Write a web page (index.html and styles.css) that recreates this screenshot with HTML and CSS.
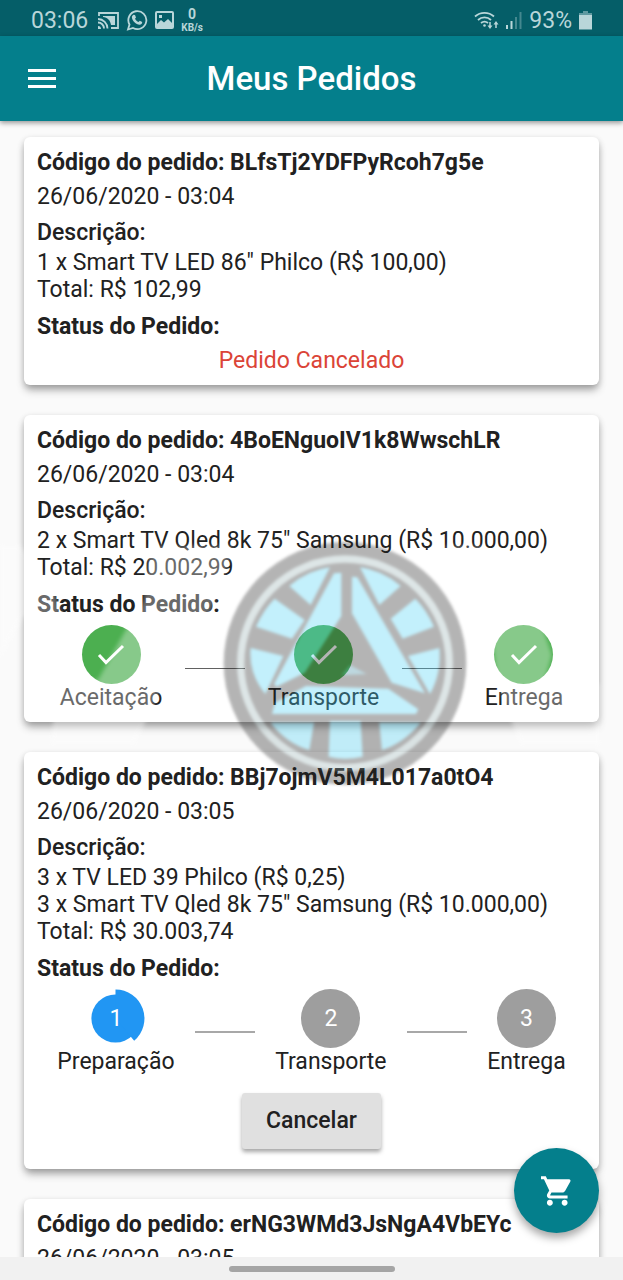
FILE: index.html
```html
<!DOCTYPE html>
<html lang="pt-BR">
<head>
<meta charset="utf-8">
<meta name="viewport" content="width=device-width, initial-scale=1">
<title>Meus Pedidos</title>
<link rel="stylesheet" href="styles.css">
</head>
<body>
<div class="app">
  <div class="statusbar">
    <span class="clock">03:06</span>
    <svg class="ic-cast" viewBox="0 0 21 17" width="21" height="17" fill="none" stroke="currentColor" stroke-width="1.8"><path d="M1 4V1h19v15h-7"/><path d="M5 4h12v9h-4C12.500 8.500 9.500 5.500 5 5z" fill="currentColor" stroke="none"/><path d="M0 7a9.500 9.500 0 0 1 9.500 9.500M0 10.500a6 6 0 0 1 6 6"/><path d="M0 14a3 3 0 0 1 3 3H0z" fill="currentColor" stroke="none"/></svg>
    <svg class="ic-wa" viewBox="0 0 22 22" width="22" height="22"><path d="M2 20.500l1.500-5A9 9 0 1 1 7 19z" fill="none" stroke="currentColor" stroke-width="1.800"/><path d="M7.500 5.800l1.500.2 1 2.500-1 1.300c.8 1.500 2 2.600 3.500 3.300l1.300-1.300 2.400 1.200c.1 1.500-1 2.700-2.700 2.700-3.500-.4-7.300-4-7.600-7.300 0-1 .6-2 1.600-2.600z" fill="currentColor"/></svg>
    <svg class="ic-img" viewBox="0 0 19 18" width="19" height="18"><path fill="currentColor" fill-rule="evenodd" d="M2 0h15a2 2 0 0 1 2 2v14a2 2 0 0 1-2 2H2a2 2 0 0 1-2-2V2a2 2 0 0 1 2-2zM2 2v11l4-4 3 2.500L13 8l4 4V2zM4 4h3v3H4z"/></svg>
    <span class="speed"><b>0</b><small>KB/s</small></span>
    <span class="grow"></span>
    <svg class="ic-wifi" viewBox="0 0 25 20" width="25" height="20" fill="none" stroke="currentColor" stroke-width="1.800"><path d="M1 6.500a14 14 0 0 1 19 0M4 10a9.500 9.500 0 0 1 13 0M7 13a5.500 5.500 0 0 1 7 0"/><circle cx="10.500" cy="15.500" r="1.300" fill="currentColor" stroke="none"/><path d="M16 12v5M22 18v-5" stroke-width="1.500"/><path d="M13.500 15.500h5L16 19zM19.500 14.500h5L22 11z" fill="currentColor" stroke="none"/></svg>
    <svg class="ic-signal" viewBox="0 0 16 17" width="16" height="17" fill="currentColor"><path d="M0 13h2v4H0zM4.500 9h2v8h-2z"/><path opacity=".35" d="M9 5h2v12H9zM13.500 0h2v17h-2z"/></svg>
    <span class="battery-text">93%</span>
    <svg class="ic-bat" viewBox="0 0 13 19" width="13" height="19"><path fill="currentColor" opacity=".5" d="M4 0h5v2h4v3H0V2h4z"/><path fill="currentColor" d="M0 4h13v14.500H0z"/></svg>
  </div>

  <header class="appbar">
    <button class="menu" type="button" aria-label="Menu"><svg viewBox="0 0 28 19" width="28" height="19"><path fill="currentColor" d="M0 0h28v3H0zM0 8h28v3H0zM0 16h28v3H0z"/></svg></button>
    <h1>Meus Pedidos</h1>
  </header>

  <main class="orders">
    <article class="card">
      <h2>Código do pedido: BLfsTj2YDFPyRcoh7g5e</h2>
      <p class="date">26/06/2020 - 03:04</p>
      <h3>Descrição:</h3>
      <p class="items">1 x Smart TV LED 86" Philco (R$ 100,00)<br>Total: R$ 102,99</p>
      <h4>Status do Pedido:</h4>
      <p class="cancelled">Pedido Cancelado</p>
    </article>

    <article class="card">
      <h2>Código do pedido: 4BoENguoIV1k8WwschLR</h2>
      <p class="date">26/06/2020 - 03:04</p>
      <h3>Descrição:</h3>
      <p class="items">2 x Smart TV Qled 8k 75" Samsung (R$ 10.000,00)<br>Total: R$ 20.002,99</p>
      <h4>Status do Pedido:</h4>
      <div class="steps">
        <div class="step"><span class="dot done"><svg viewBox="0 0 28 21" width="28" height="21"><path d="M2 11l7 7.500L26 2" fill="none" stroke="currentColor" stroke-width="3"/></svg></span>Aceitação</div>
        <span class="link dark"></span>
        <div class="step"><span class="dot done"><svg viewBox="0 0 28 21" width="28" height="21"><path d="M2 11l7 7.500L26 2" fill="none" stroke="currentColor" stroke-width="3"/></svg></span>Transporte</div>
        <span class="link dark"></span>
        <div class="step"><span class="dot done"><svg viewBox="0 0 28 21" width="28" height="21"><path d="M2 11l7 7.500L26 2" fill="none" stroke="currentColor" stroke-width="3"/></svg></span>Entrega</div>
      </div>
    </article>

    <article class="card">
      <h2>Código do pedido: BBj7ojmV5M4L017a0tO4</h2>
      <p class="date">26/06/2020 - 03:05</p>
      <h3>Descrição:</h3>
      <p class="items">3 x TV LED 39 Philco (R$ 0,25)<br>3 x Smart TV Qled 8k 75" Samsung (R$ 10.000,00)<br>Total: R$ 30.003,74</p>
      <h4>Status do Pedido:</h4>
      <div class="steps">
        <div class="step"><span class="dot current"><svg class="progress" viewBox="-30 -30 60 60"><circle r="24.500" fill="#2196f3"/><path d="M0 0V-29.500A29.500 29.500 0 0 1 19 22.500z" fill="#2196f3"/></svg><span class="num">1</span></span>Preparação</div>
        <span class="link"></span>
        <div class="step"><span class="dot">2</span>Transporte</div>
        <span class="link"></span>
        <div class="step"><span class="dot">3</span>Entrega</div>
      </div>
      <button class="cancel" type="button">Cancelar</button>
    </article>

    <article class="card">
      <h2>Código do pedido: erNG3WMd3JsNgA4VbEYc</h2>
      <p class="date">26/06/2020 - 03:05</p>
    </article>

    <svg class="watermark" viewBox="0 530 623 260" aria-hidden="true">
      <g class="veil" fill="#fff">
        <path d="M150 546H234L212 608 160 690 135 745H50L58 684 98 680 128 626 144 600z"/>
        <path d="M0 545H20L54 590 62 616 24 616 0 660z"/>
        <path d="M444 546H482L542 625 552 655 545 680 600 684 600 745H520L498 684 492 640z"/>
      </g>
      <g class="emblem" transform="translate(200 530) scale(.3333)">
        <circle cx="435" cy="400" r="364" fill="#202020"/>
        <circle cx="435" cy="400" r="313" fill="none" stroke="#9ab4b6" stroke-width="22"/>
        <g fill="#4cd2f6">
          <path d="M268 168Q325 120 390 112L332 225z"/>
          <path d="M224 206L314 270 276 326 168 290Q190 240 224 206z"/>
          <path d="M152 354L250 378 196 492Q145 430 152 354z"/>
          <path d="M602 168Q545 120 480 112L538 225z"/>
          <path d="M646 206L572 266 608 326 702 290Q680 240 646 206z"/>
          <path d="M718 354L624 378 690 492Q725 430 718 354z"/>
          <path d="M402 130L424 128 424 258 314 428 230 470 222 462z"/>
          <path d="M456 140L472 142 675 490 575 458 456 250z"/>
          <path d="M318 468L565 476 655 538 648 552H216L225 518z"/>
          <path d="M212 578H342L328 660Q260 640 212 578z"/>
          <path d="M390 574H482L488 680Q435 692 386 680z"/>
          <path d="M538 578H662Q610 640 546 660z"/>
          <path d="M450 405L500 432 425 436z" opacity=".6"/>
        </g>
      </g>
    </svg>
  </main>

  <button class="fab" type="button" aria-label="Carrinho"><svg viewBox="1 2 21 20" width="31" height="30"><path fill="currentColor" d="M7 18c-1.100 0-1.990.9-1.990 2S5.900 22 7 22s2-.9 2-2-.9-2-2-2zM1 2v2h2l3.600 7.590-1.350 2.450c-.16.280-.25.610-.25.960 0 1.100.9 2 2 2h12v-2H7.420c-.14 0-.25-.11-.25-.25l.03-.12.900-1.630h7.450c.75 0 1.410-.41 1.750-1.030l3.580-6.490A1 1 0 0 0 20 4H5.210l-.94-2H1zm16 16c-1.100 0-1.990.9-1.990 2s.89 2 1.990 2 2-.9 2-2-.9-2-2-2z"/></svg></button>
  <div class="navbar"><span class="handle"></span></div>
</div>
</body>
</html>
```
FILE: styles.css
```css
* {
  box-sizing: border-box;
}

body {
  margin: 0;
  background: #fafafa;
  color: #212121;
  font: 23px/27px Roboto, sans-serif;
}

h1, h2, h3, h4, p {
  margin: 0;
  font-size: inherit;
}

button {
  border: 0;
  padding: 0;
  font: inherit;
  color: inherit;
  background: none;
  cursor: pointer;
}

svg {
  display: block;
  flex: none;
}

.app {
  position: relative;
  display: flex;
  flex-direction: column;
  height: 100vh;
  overflow: hidden;
}

/* system status bar */
.statusbar {
  display: flex;
  align-items: center;
  height: 36px;
  flex: none;
  padding: 4px 31px 0;
  background: #055e68;
  color: #b9d6d9;
  gap: 7px;
}

.clock {
  margin-right: 3px;
}

.grow {
  flex: 1;
}

.speed {
  display: flex;
  flex-direction: column;
  align-items: center;
  font-size: 14px;
  line-height: 15px;
}

.speed small {
  font-size: 10px;
  font-weight: 700;
  line-height: 11px;
}

/* app bar */
.appbar {
  position: relative;
  z-index: 2;
  display: grid;
  grid-template-columns: 28px 1fr 28px;
  align-items: center;
  flex: none;
  height: 85px;
  padding: 0 28px;
  background: #047f8c;
  color: #fff;
  box-shadow: 0 2px 5px rgba(0, 0, 0, .4);
}

.appbar h1 {
  text-align: center;
  font-size: 33px;
  line-height: 40px;
  font-weight: 500;
}

/* order list */
.orders {
  position: relative;
  flex: 1;
  min-height: 0;
  overflow: hidden;
  display: flex;
  flex-direction: column;
  gap: 30px;
  padding: 16px 24px 0;
}

.card {
  flex: none;
  padding: 12px 13px 11px;
  border-radius: 6px;
  background: #fff;
  box-shadow: 0 6px 8px -1px rgba(0, 0, 0, .3), 0 2px 6px rgba(0, 0, 0, .15);
}

.card h2 {
  font-weight: 700;
  margin-bottom: 7px;
}

.date {
  margin-bottom: 9px;
}

.card h3 {
  font-weight: 500;
  margin-bottom: 3px;
}

.items {
  margin-bottom: 10px;
}

.card h4 {
  font-weight: 700;
  margin-bottom: 7px;
}

.cancelled {
  text-align: center;
  color: #db4437;
}

.steps {
  display: flex;
  align-items: center;
  justify-content: space-evenly;
}

.step {
  display: flex;
  flex-direction: column;
  align-items: center;
}

.dot {
  position: relative;
  display: flex;
  align-items: center;
  justify-content: center;
  width: 59px;
  height: 59px;
  border-radius: 50%;
  background: #9e9e9e;
  color: #fff;
}

.done {
  background: #4caf50;
}

.current {
  background: none;
}

.progress {
  position: absolute;
  inset: 0;
}

.num {
  position: relative;
}

.link {
  width: 60px;
  height: 2px;
  background: #a8a8a8;
}

.dark {
  height: 1px;
  background: #616161;
}

.cancel {
  display: block;
  margin: 18px auto 9px;
  padding: 14px 24px 15px;
  border-radius: 3px;
  background: #e0e0e0;
  font-weight: 500;
  box-shadow: 0 3px 4px rgba(0, 0, 0, .35);
}

/* translucent emblem drawn over the list */
.watermark {
  position: absolute;
  top: 409px;
  left: 0;
  width: 100%;
  pointer-events: none;
}

.veil {
  opacity: .33;
  filter: blur(2px);
}

.emblem {
  opacity: .33;
  filter: blur(5px);
}

.fab {
  position: absolute;
  z-index: 3;
  right: 24px;
  bottom: 47px;
  display: flex;
  align-items: center;
  justify-content: center;
  width: 85px;
  height: 85px;
  border-radius: 50%;
  background: #047f8c;
  color: #fff;
  box-shadow: 0 5px 9px rgba(0, 0, 0, .35);
}

.navbar {
  position: relative;
  z-index: 2;
  display: flex;
  align-items: center;
  justify-content: center;
  flex: none;
  height: 23px;
  background: #f1f1f1;
}

.handle {
  width: 166px;
  height: 6px;
  border-radius: 3px;
  background: #a5a5a5;
}
```
